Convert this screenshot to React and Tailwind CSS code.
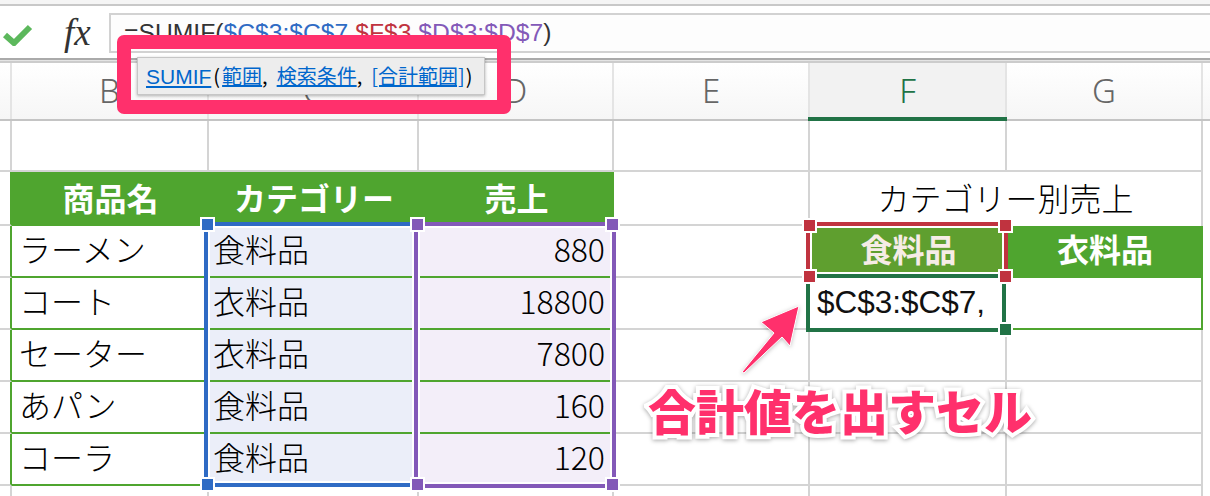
import React from 'react';

const rows = [
    ['ラーメン', '食料品', '880'],
    ['コート', '衣料品', '18800'],
    ['セーター', '衣料品', '7800'],
    ['あパン', '食料品', '160'],
    ['コーラ', '食料品', '120'],
];

const handles = [
    'left-[200px] top-[217px] bg-[#2f6bc4]',
    'left-[200px] top-[477px] bg-[#2f6bc4]',
    'left-[410px] top-[217px] bg-[#8359b8]',
    'left-[605px] top-[217px] bg-[#8359b8]',
    'left-[410px] top-[477px] bg-[#8359b8]',
    'left-[605px] top-[477px] bg-[#8359b8]',
    'left-[802px] top-[218px] bg-[#c0333f]',
    'left-[998px] top-[218px] bg-[#c0333f]',
    'left-[802px] top-[269px] bg-[#c0333f]',
    'left-[998px] top-[269px] bg-[#c0333f]',
    'left-[998px] top-[322px] bg-[#217346]',
];

const grid = 'border-r-2 border-b-2 border-[#d4d4d4]';
const tableCell = 'border-b-2 border-[#4fa52f] flex items-center pb-[6px] font-light text-black';
const headCell = 'bg-[#4fa52f] text-white font-bold flex items-center justify-center pb-[5px]';

const ColHead = ({ label }) => (
    <div className="border-r-2 border-[#e4e4e4] flex items-center justify-center text-[#666] text-[33px] font-light font-['Noto_Sans',sans-serif]">
        {label}
    </div>
);

const App = () => {
    return (
        <div className="relative w-[1210px] h-[496px] overflow-hidden bg-white text-[#111] font-['Noto_Sans_CJK_JP','Liberation_Sans',sans-serif]">
            {/* formula bar */}
            <div className="h-[6px] bg-[#f5f5f5] border-b-2 border-[#c8c8c8]" />
            <div className="h-[52px] bg-white flex items-start pt-[7px]">
                <div className="w-[109px] h-[39px] flex items-center shrink-0">
                    <svg width="30" height="22" viewBox="0 0 30 22" className="ml-[3px] mt-[4px]">
                        <path d="M2 11 L11 19 L27 3" fill="none" stroke="#5cb85c" strokeWidth="6" />
                    </svg>
                    <span className="ml-[31px] text-[37px] leading-none italic text-[#333] font-['Liberation_Serif',serif]">fx</span>
                </div>
                <div className="flex-1 h-[40px] border-t-2 border-b-2 border-l-2 border-[#d2d2d2] bg-[#fdfdfd] pl-[13px] flex items-center text-[24.7px] text-[#333] font-['Liberation_Sans',sans-serif] whitespace-nowrap">
                    =SUMIF(<span className="text-[#2f6bc4]">$C$3:$C$7</span>,<span className="text-[#c0333f]">$F$3</span>,<span className="text-[#8359b8]">$D$3:$D$7</span>)
                </div>
            </div>
            <div className="h-[5px] border-t-2 border-b-2 border-t-[#aaaaaa] border-b-[#cccccc] bg-[#e4e4e4]" />

            {/* column letters */}
            <div className="h-[58px] grid grid-cols-[12px_197px_210px_195px_196px_197px_196px_7px] bg-gradient-to-b from-white to-[#f6f6f6] border-b-2 border-[#c4c4c4]">
                <div className="border-r-2 border-[#e4e4e4]" />
                <ColHead label="B" />
                <ColHead label="C" />
                <ColHead label="D" />
                <ColHead label="E" />
                <div className="relative bg-[#f2f2f2] border-r-2 border-[#e4e4e4] flex items-center justify-center text-[#217346] text-[33px] font-light font-['Noto_Sans',sans-serif]">
                    F
                    <div className="absolute left-[-2px] right-[-2px] bottom-[-2px] h-[4px] bg-[#217346]" />
                </div>
                <ColHead label="G" />
                <div />
            </div>

            {/* sheet */}
            <div className="grid grid-cols-[12px_197px_210px_195px_196px_197px_196px_7px] grid-rows-[51px_54px_52px_52px_52px_52px_52px_10px] text-[32px] leading-none">
                {/* row 1 */}
                <div className={grid} />
                <div className={grid} />
                <div className={grid} />
                <div className={grid} />
                <div className={grid} />
                <div className={grid} />
                <div className={grid} />
                <div />

                {/* table header + title */}
                <div className="border-r-2 border-b-2 border-r-[#4fa52f] border-b-[#d4d4d4]" />
                <div className={headCell}>商品名</div>
                <div className={headCell}>カテゴリー</div>
                <div className={headCell}>売上</div>
                <div className={grid} />
                <div className="col-span-2 border-r-2 border-[#d4d4d4] flex items-center justify-center pb-[5px] font-light text-black">カテゴリー別売上</div>
                <div />

                {rows.map((r, i) => (
                    <React.Fragment key={r[0]}>
                        <div className="border-r-2 border-b-2 border-r-[#4fa52f] border-b-[#d4d4d4]" />
                        <div className={`${tableCell} pl-[7px]`}>{r[0]}</div>
                        <div className={`${tableCell} bg-[#ebeef9] pl-[4px]`}>{r[1]}</div>
                        <div className={`${tableCell} bg-[#f3eef9] justify-end pr-[9px]`}>{r[2]}</div>
                        {i === 0 && (
                            <>
                                <div className={grid} />
                                <div className="bg-[#5f9f2f] text-[#f6ece6] font-bold flex items-center justify-center pb-[8px]">食料品</div>
                                <div className="bg-[#4fa52f] text-white font-bold flex items-center justify-center pb-[8px]">衣料品</div>
                            </>
                        )}
                        {i === 1 && (
                            <>
                                <div className={grid} />
                                <div className="border-b-2 border-[#4fa52f] flex items-center pl-[7px] text-[31.5px] font-['Liberation_Sans',sans-serif]">$C$3:$C$7,</div>
                                <div className="border-r-2 border-b-2 border-[#4fa52f]" />
                            </>
                        )}
                        {i > 1 && (
                            <>
                                <div className={grid} />
                                <div className={grid} />
                                <div className={grid} />
                            </>
                        )}
                        <div />
                    </React.Fragment>
                ))}

                {/* cut-off bottom row */}
                <div className="border-r-2 border-[#d4d4d4]" />
                <div className="border-r-2 border-[#d4d4d4]" />
                <div className="border-r-2 border-[#d4d4d4]" />
                <div className="border-r-2 border-[#d4d4d4]" />
                <div className="border-r-2 border-[#d4d4d4]" />
                <div className="border-r-2 border-[#d4d4d4]" />
                <div className="border-r-2 border-[#d4d4d4]" />
                <div />
            </div>

            {/* range highlights */}
            <div className="absolute left-[204px] top-[222px] w-[214px] h-[265px] border-4 border-[#2f6bc4] shadow-[inset_0_0_0_2px_white]" />
            <div className="absolute left-[414px] top-[222px] w-[202px] h-[266px] border-4 border-[#8359b8] shadow-[inset_0_0_0_2px_white]" />
            <div className="absolute left-[806px] top-[222px] w-[202px] h-[56px] border-4 border-[#c0333f] shadow-[inset_0_0_0_2px_white]" />
            <div className="absolute left-[806px] top-[274px] w-[200px] h-[58px] border-4 border-[#217346]" />
            {handles.map((h) => (
                <div key={h} className={`absolute w-[15px] h-[15px] border-2 border-white ${h}`} />
            ))}

            {/* annotation */}
            <div className="absolute left-[117px] top-[35px] w-[394px] h-[79px] border-[14px] border-[#ff306c] rounded-[7px]" />
            <div className="absolute left-[137px] top-[57px] w-[348px] h-[38px] bg-[#ededed] border border-[#c6c6c6] shadow-[0_1px_3px_rgba(0,0,0,0.3)] flex items-center pl-[8px] text-[20px] leading-none text-black whitespace-nowrap">
                <span className="text-[#0066cc] underline text-[21px] font-['Liberation_Sans',sans-serif]">SUMIF</span>
                <span className="ml-[2px] mr-[2px]">(</span>
                <span className="text-[#0066cc] underline">範囲</span>
                <span className="mr-[9px]">,</span>
                <span className="text-[#0066cc] underline">検索条件</span>
                <span className="mr-[9px]">,</span>
                <span className="text-[#0066cc] underline">[合計範囲]</span>
                <span className="ml-[1px]">)</span>
            </div>

            <svg width="70" height="80" viewBox="0 0 70 80" className="absolute left-[735px] top-[300px] drop-shadow-[0_1px_2px_rgba(0,0,0,0.25)]">
                <path d="M64 6 L55 46 L47 37 L9 73 L7 72 L39 33 L26 22 Z" fill="#ff306c" stroke="white" strokeWidth="1" />
            </svg>
            <div className="absolute left-[648px] top-[380px] text-[48px] leading-[58px] font-black text-[#ff306c] whitespace-nowrap [-webkit-text-stroke:8px_white] [paint-order:stroke_fill] drop-shadow-[0_1px_2px_rgba(0,0,0,0.35)]">
                合計値を出すセル
            </div>
        </div>
    );
};

export default App;
